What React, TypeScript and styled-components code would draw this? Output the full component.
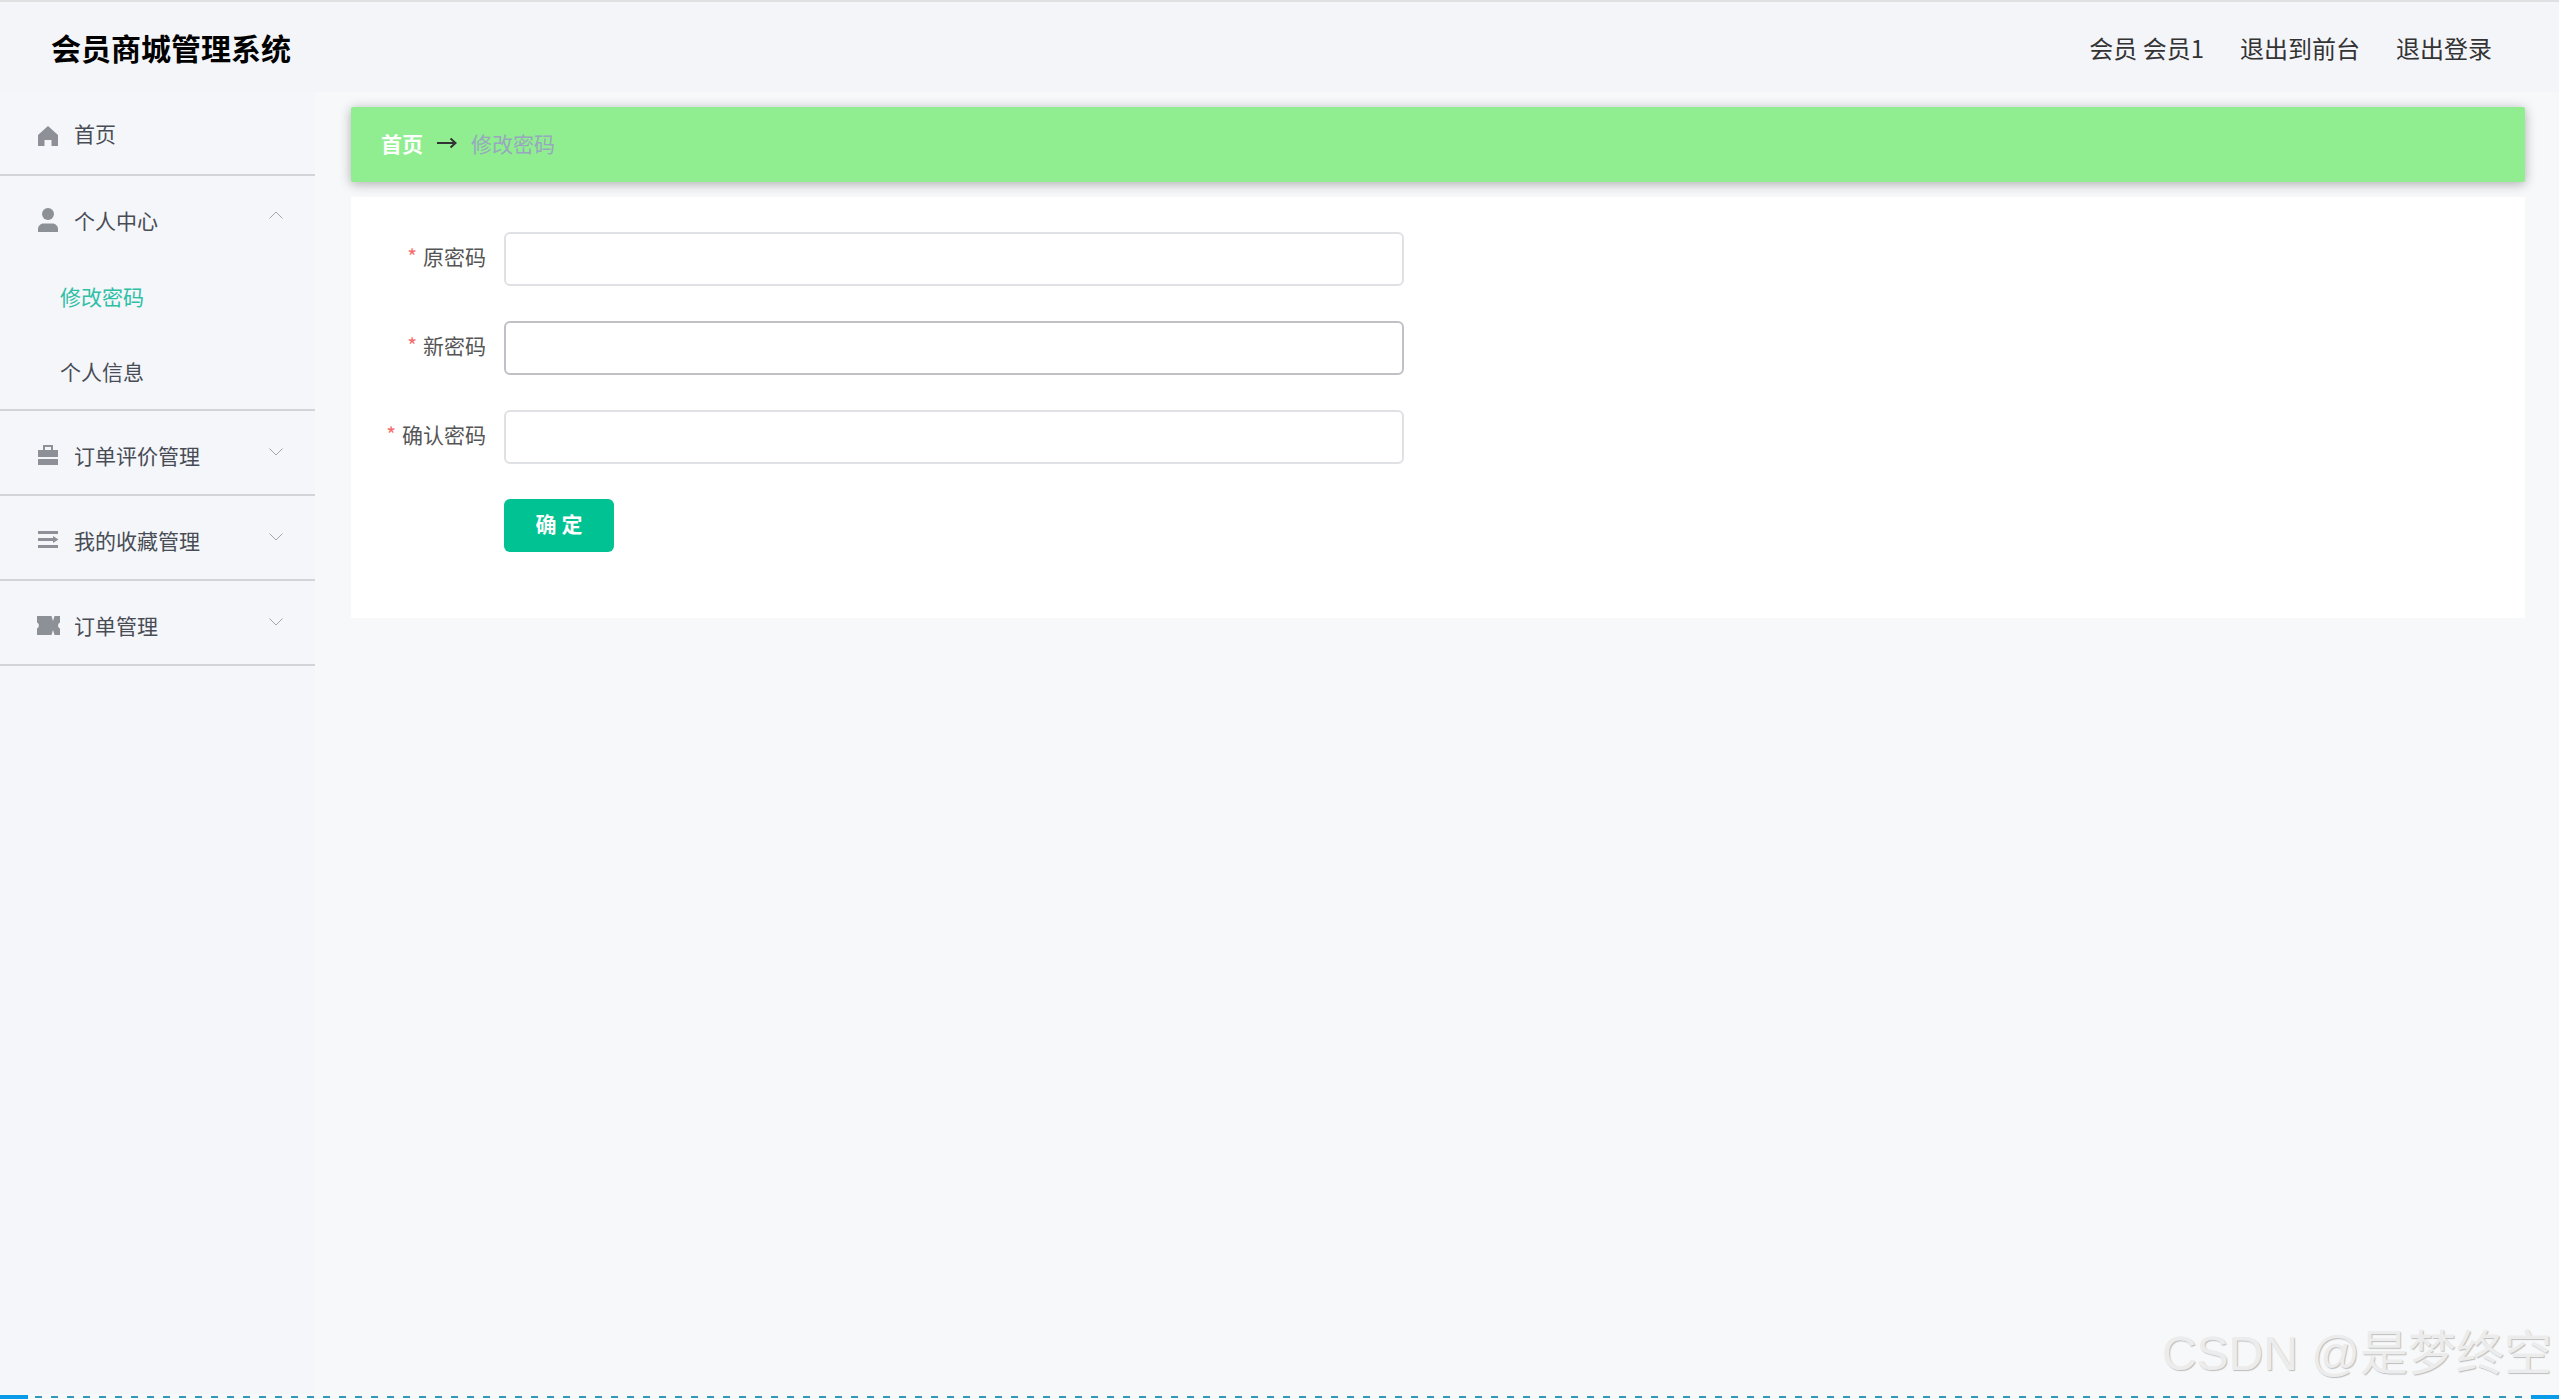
import styled, { createGlobalStyle } from "styled-components";

const GlobalStyle = createGlobalStyle`
  html, body {
    margin: 0;
    padding: 0;
    background: #f7f8fa;
    font-family: "Noto Sans CJK SC", "Noto Sans", sans-serif;
  }
  * {
    box-sizing: border-box;
  }
`;

type IconKind = "home" | "user" | "case" | "fold" | "ticket";

function MenuIcon({ kind }: { kind: IconKind }) {
  return (
    <IconSvg viewBox="0 0 22 24" $lower={kind === "home"}>
      {kind === "home" && (
        <path d="M11 2 21 11V22H14.5V16H7.5V22H1V11Z" />
      )}
      {kind === "user" && (
        <>
          <circle cx="11" cy="6" r="6" />
          <path d="M1 24V21C1 17.5 4 15.5 7 15.5H15C18 15.5 21 17.5 21 21V24Z" />
        </>
      )}
      {kind === "case" && (
        <>
          <path d="M6 7V2H16V7H14V4H8V7Z" />
          <path d="M1 7H21V14H1Z" />
          <path d="M1 16H21V22H1Z" />
        </>
      )}
      {kind === "fold" && (
        <>
          <path d="M1 3H21V6H1Z" />
          <path d="M1 10H16V13H1Z" />
          <path d="M1 17H21V20H1Z" />
          <path d="M16 8 21.5 11.5 16 15Z" />
        </>
      )}
      {kind === "ticket" && (
        <path d="M0 3H14.5L16 8 17.5 3H23V9.5C20.5 10.5 20.5 14.5 23 15.5V22H17.5L16 17 14.5 22H0V15.5C2.5 14.5 2.5 10.5 0 9.5Z" />
      )}
    </IconSvg>
  );
}

function Chevron({ up }: { up?: boolean }) {
  return (
    <ChevronSvg viewBox="0 0 14 8" $up={up}>
      <path d={up ? "M.5 7.5 7 1l6.5 6.5" : "M.5.5 7 7 13.5.5"} />
    </ChevronSvg>
  );
}

const menus: { kind: IconKind; label: string }[] = [
  { kind: "case", label: "订单评价管理" },
  { kind: "fold", label: "我的收藏管理" },
  { kind: "ticket", label: "订单管理" },
];

const fields = ["原密码", "新密码", "确认密码"];

export default function App() {
  return (
    <Page>
      <GlobalStyle />
      <TopBar>
        <Title>会员商城管理系统</Title>
        <TopLinks>
          <TopLink>会员 会员1</TopLink>
          <TopLink>退出到前台</TopLink>
          <TopLink>退出登录</TopLink>
        </TopLinks>
      </TopBar>
      <Body>
        <Sidebar>
          <HomeRow>
            <MenuIcon kind="home" />
            <MenuLabel>首页</MenuLabel>
          </HomeRow>
          <Group>
            <MenuRow>
              <MenuIcon kind="user" />
              <MenuLabel>个人中心</MenuLabel>
              <Chevron up />
            </MenuRow>
            <SubItem $active>修改密码</SubItem>
            <SubItem>个人信息</SubItem>
          </Group>
          {menus.map((menu) => (
            <Group key={menu.label}>
              <MenuRow>
                <MenuIcon kind={menu.kind} />
                <MenuLabel>{menu.label}</MenuLabel>
                <Chevron />
              </MenuRow>
            </Group>
          ))}
        </Sidebar>
        <Main>
          <Breadcrumb>
            <CrumbHome>首页</CrumbHome>
            <CrumbArrow viewBox="0 0 20 12">
              <path d="M0 6H18M13.5 1.5 18.5 6 13.5 10.5" />
            </CrumbArrow>
            <CrumbCurrent>修改密码</CrumbCurrent>
          </Breadcrumb>
          <Card>
            {fields.map((field, index) => (
              <FormRow key={field}>
                <FieldLabel>
                  <Star>*</Star>
                  {field}
                </FieldLabel>
                <FieldInput type="password" $hover={index === 1} />
              </FormRow>
            ))}
            <ButtonRow>
              <SubmitButton>确 定</SubmitButton>
            </ButtonRow>
          </Card>
        </Main>
      </Body>
      <BottomStrip>
        <BlueEnd />
        <Dashes />
        <BlueEnd />
      </BottomStrip>
      <Watermark>CSDN @是梦终空</Watermark>
    </Page>
  );
}

const Page = styled.div`
  position: relative;
  width: 2559px;
  height: 1399px;
  display: flex;
  flex-direction: column;
  overflow: hidden;
  border-top: 2px solid #dfe0e2;
  background: #f7f8fa;
`;

const TopBar = styled.header`
  height: 90px;
  flex: none;
  display: flex;
  align-items: center;
  justify-content: space-between;
  padding: 0 67px 0 51px;
  background: #f4f5f9;
`;

const Title = styled.div`
  font-size: 30px;
  font-weight: 700;
  color: #000;
`;

const TopLinks = styled.nav`
  display: flex;
  gap: 36px;
`;

const TopLink = styled.span`
  font-size: 24px;
  color: #333;
`;

const Body = styled.div`
  flex: 1;
  min-height: 0;
  display: flex;
`;

const Sidebar = styled.aside`
  width: 315px;
  flex: none;
  background: #f4f6fa;
`;

const HomeRow = styled.div`
  height: 84px;
  padding: 0 0 0 37px;
  display: flex;
  align-items: center;
  gap: 15px;
  border-bottom: 2px solid #d3d4d7;
`;

const Group = styled.div`
  border-bottom: 2px solid #d3d4d7;
`;

const MenuRow = styled.div`
  height: 83px;
  padding: 4px 32px 0 37px;
  display: flex;
  align-items: center;
  gap: 15px;
`;

const IconSvg = styled.svg<{ $lower?: boolean }>`
  width: 22px;
  height: 24px;
  flex: none;
  margin-top: ${(p) => (p.$lower ? "5px" : "0")};
  overflow: visible;
  fill: #8e9097;
`;

const MenuLabel = styled.span`
  flex: 1;
  font-size: 21px;
  color: #484c55;
`;

const ChevronSvg = styled.svg<{ $up?: boolean }>`
  width: 14px;
  height: 8px;
  flex: none;
  margin-bottom: ${(p) => (p.$up ? "10px" : "6px")};
  fill: none;
  stroke: #a3a6ad;
  stroke-width: 1;
`;

const SubItem = styled.div<{ $active?: boolean }>`
  height: 75px;
  padding: 0 0 2px 60px;
  display: flex;
  align-items: center;
  font-size: 21px;
  color: ${(p) => (p.$active ? "#2ebfa5" : "#484c55")};
`;

const Main = styled.main`
  flex: 1;
  min-width: 0;
  padding: 15px 34px 0 36px;
`;

const Breadcrumb = styled.div`
  height: 75px;
  padding: 0 30px 3px;
  display: flex;
  align-items: center;
  border-radius: 2px;
  background: #90ee90;
  box-shadow: 0 2px 12px rgba(0, 0, 0, 0.3);
  font-size: 21px;
`;

const CrumbHome = styled.span`
  font-weight: 700;
  color: #fff;
`;

const CrumbArrow = styled.svg`
  width: 20px;
  height: 12px;
  margin: 0 14px;
  fill: none;
  stroke: #333;
  stroke-width: 2;
`;

const CrumbCurrent = styled.span`
  color: #97a8be;
`;

const Card = styled.section`
  margin-top: 15px;
  height: 421px;
  padding: 35px 0 0;
  background: #fff;
`;

const FormRow = styled.div`
  display: flex;
  align-items: center;
  height: 54px;
  margin-bottom: 35px;
`;

const FieldLabel = styled.label`
  width: 153px;
  padding: 0 18px 6px 0;
  text-align: right;
  font-size: 21px;
  color: #555;
`;

const Star = styled.span`
  margin-right: 6px;
  color: #f56c6c;
`;

const FieldInput = styled.input<{ $hover?: boolean }>`
  width: 900px;
  height: 54px;
  border: 2px solid ${(p) => (p.$hover ? "#bfc1c6" : "#e0e1e4")};
  border-radius: 6px;
  background: #fff;
  outline: none;
`;

const ButtonRow = styled.div`
  padding-left: 153px;
`;

const SubmitButton = styled.button`
  width: 110px;
  height: 53px;
  padding: 0 0 5px;
  border: none;
  border-radius: 6px;
  background: #00c292;
  font-family: inherit;
  font-size: 21px;
  font-weight: 700;
  color: #fff;
`;

const BottomStrip = styled.div`
  height: 5px;
  flex: none;
  display: flex;
  align-items: flex-end;
`;

const BlueEnd = styled.div`
  width: 28px;
  height: 4px;
  flex: none;
  background: #0a9be8;
`;

const Dashes = styled.div`
  flex: 1;
  height: 2px;
  margin: 0 7px 1px;
  background: repeating-linear-gradient(90deg, #3299bd 0 7px, transparent 7px 16px);
`;

const Watermark = styled.div`
  position: absolute;
  right: 7px;
  bottom: 15px;
  font-family: "Liberation Sans", "Noto Sans CJK SC", sans-serif;
  font-size: 48px;
  line-height: 60px;
  white-space: nowrap;
  color: #ececec;
  text-shadow: 1px 1px 1px #bdbdbd;
`;
